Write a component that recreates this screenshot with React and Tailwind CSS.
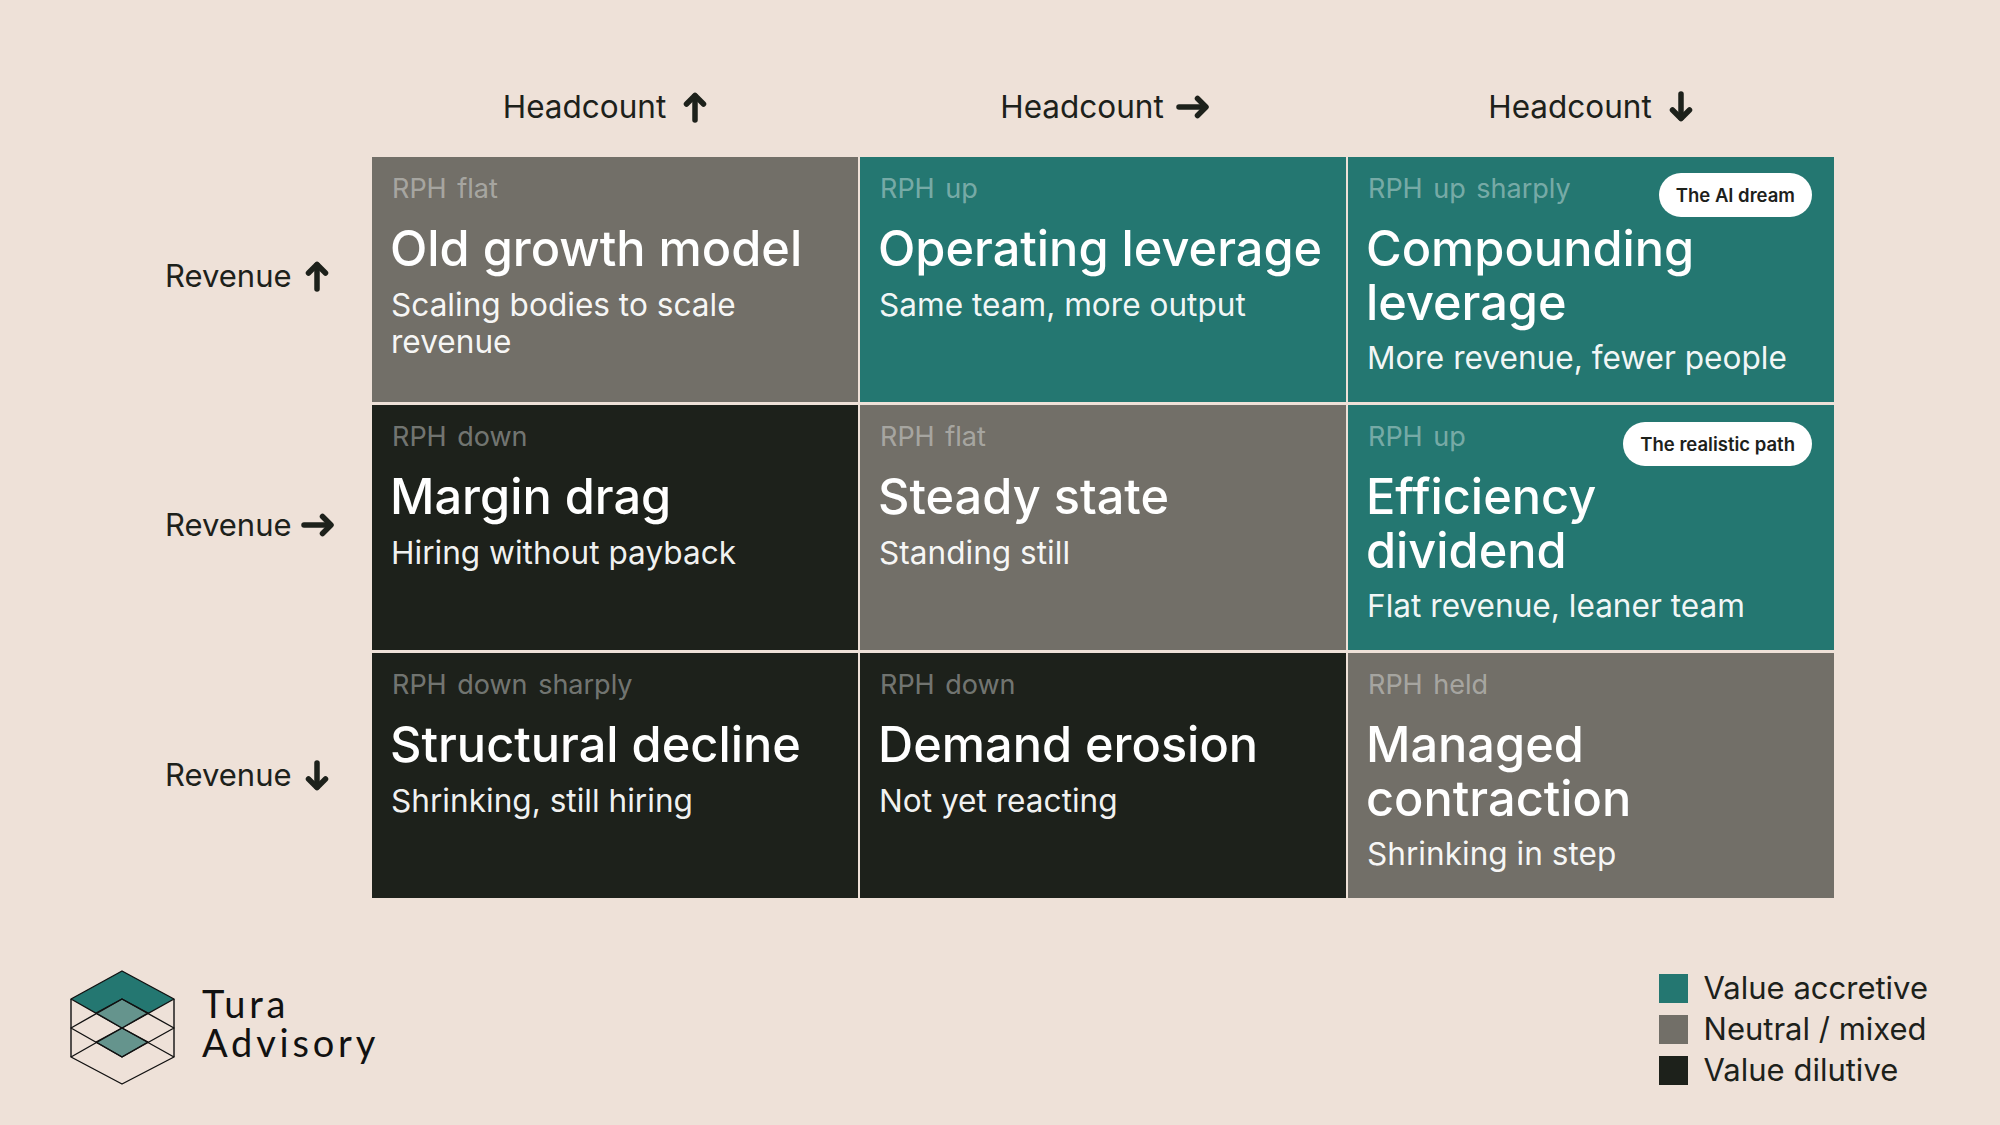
import React from "react";

const teal = "bg-[#247771]";
const gray = "bg-[#726f68]";
const dark = "bg-[#1d211b]";

const Arrow = ({ dir }) => {
  if (dir === "up")
    return (
      <svg width="24" height="32" viewBox="0 0 24 32" fill="none" stroke="#1d211b" strokeWidth="5.5" strokeLinecap="round" strokeLinejoin="round">
        <path d="M12 29V5" />
        <path d="M3.5 13L12 4.5L20.5 13" />
      </svg>
    );
  if (dir === "down")
    return (
      <svg width="24" height="32" viewBox="0 0 24 32" fill="none" stroke="#1d211b" strokeWidth="5.5" strokeLinecap="round" strokeLinejoin="round">
        <path d="M12 3V27" />
        <path d="M3.5 19L12 27.5L20.5 19" />
      </svg>
    );
  return (
    <svg width="34" height="24" viewBox="0 0 34 24" fill="none" stroke="#1d211b" strokeWidth="5.5" strokeLinecap="round" strokeLinejoin="round">
      <path d="M3 12H29" />
      <path d="M21.5 3.5L30 12L21.5 20.5" />
    </svg>
  );
};

const Logo = () => (
  <svg width="110" height="118" viewBox="68 968 110 118" fill="none" stroke="#111" strokeWidth="1.4" strokeLinejoin="round">
    <path d="M122 971L174 999L122 1028L71 999Z" fill="#247771" />
    <path d="M122 999L148 1013L122 1028L96 1013Z" fill="#65948d" />
    <path d="M122 1028L148 1042L122 1057L96 1042Z" fill="#65948d" />
    <path d="M71 1028L122 999L174 1028L122 1057Z" />
    <path d="M71 1057L122 1028L174 1057L122 1084Z" />
    <path d="M71 999V1057M174 999V1057" />
  </svg>
);

const cols = [
  { label: "Headcount", dir: "up", cls: "pr-[24px] gap-[17px]" },
  { label: "Headcount", dir: "right", cls: "gap-[12px]" },
  { label: "Headcount", dir: "down", cls: "pr-[5px] gap-[17px]" },
];

const rows = [
  {
    dir: "up",
    cls: "pb-[7px] gap-[13px]",
    cells: [
      { bg: gray, tag: "RPH flat", title: "Old growth model", sub: "Scaling bodies to scale revenue" },
      { bg: teal, tag: "RPH up", title: "Operating leverage", sub: "Same team, more output" },
      { bg: teal, tag: "RPH up sharply", title: "Compounding leverage", sub: "More revenue, fewer people", pill: "The AI dream", pillTop: "top-[16px]" },
    ],
  },
  {
    dir: "right",
    cls: "pb-[5px] gap-[9px]",
    cells: [
      { bg: dark, tag: "RPH down", title: "Margin drag", sub: "Hiring without payback" },
      { bg: gray, tag: "RPH flat", title: "Steady state", sub: "Standing still" },
      { bg: teal, tag: "RPH up", title: "Efficiency dividend", sub: "Flat revenue, leaner team", pill: "The realistic path", pillTop: "top-[17px]" },
    ],
  },
  {
    dir: "down",
    cls: "gap-[13px]",
    cells: [
      { bg: dark, tag: "RPH down sharply", title: "Structural decline", sub: "Shrinking, still hiring" },
      { bg: dark, tag: "RPH down", title: "Demand erosion", sub: "Not yet reacting" },
      { bg: gray, tag: "RPH held", title: "Managed contraction", sub: "Shrinking in step" },
    ],
  },
];

const legend = [
  { bg: teal, label: "Value accretive" },
  { bg: gray, label: "Neutral / mixed" },
  { bg: dark, label: "Value dilutive" },
];

const Cell = ({ bg, tag, title, sub, pill, pillTop }) => (
  <div className={`relative ${bg} pl-[18px] pr-[15px] pt-[13px] h-full`}>
    <p className="text-[27px] leading-[37px] text-white/40 pl-[2px] [word-spacing:3px]">{tag}</p>
    <h2 className={`mt-[15px] text-[48.7px] leading-[53.5px] font-medium text-white ${pill ? "pr-[40px]" : ""}`}>{title}</h2>
    <p className="mt-[10px] text-[31.6px] leading-[37px] text-white/95 pl-[1px]">{sub}</p>
    {pill && (
      <span className={`absolute ${pillTop} right-[22px] h-[44px] px-[17px] pt-[1px] flex items-center rounded-full bg-white text-[18.5px] font-semibold text-[#1d211b]`}>
        {pill}
      </span>
    )}
  </div>
);

export default function App() {
  return (
    <div className="w-[2000px] h-[1125px] bg-[#eee1d8] text-[#1d211b] font-['Inter',sans-serif] flex flex-col overflow-hidden">
      <div className="grid grid-cols-[372px_486px_486px_486px] gap-x-[2px] pt-[85px] h-[157px]">
        <div className="-mr-[2px]" />
        {cols.map((c, i) => (
          <div key={i} className={`flex items-center h-[44px] justify-center ${c.cls}`}>
            <span className="text-[31.5px] leading-[44px]">{c.label}</span>
            <Arrow dir={c.dir} />
          </div>
        ))}
      </div>

      <div className="grid grid-cols-[370px_486px_486px_486px] grid-rows-[245px_245px_245px] gap-x-[2px] gap-y-[3px] h-[741px]">
        {rows.map((r, i) => (
          <React.Fragment key={i}>
            <div className={`flex items-center pl-[165px] ${r.cls}`}>
              <span className="text-[31px]">Revenue</span>
              <Arrow dir={r.dir} />
            </div>
            {r.cells.map((c, j) => (
              <Cell key={j} {...c} />
            ))}
          </React.Fragment>
        ))}
      </div>

      <div className="flex justify-between items-start pl-[68px] pr-[72px] pt-[70px]">
        <div className="flex items-center gap-[24px]">
          <Logo />
          <div className="font-['Lato',sans-serif] text-[38px] leading-[39px] tracking-[3.8px] text-[#111] pb-[9px]">
            <div>Tura</div>
            <div>Advisory</div>
          </div>
        </div>
        <div className="flex flex-col gap-[12px] pt-[6px]">
          {legend.map((l) => (
            <div key={l.label} className="flex items-center gap-[16px] h-[29px]">
              <div className={`w-[29px] h-[29px] ${l.bg}`} />
              <span className="text-[31px]">{l.label}</span>
            </div>
          ))}
        </div>
      </div>
    </div>
  );
}
